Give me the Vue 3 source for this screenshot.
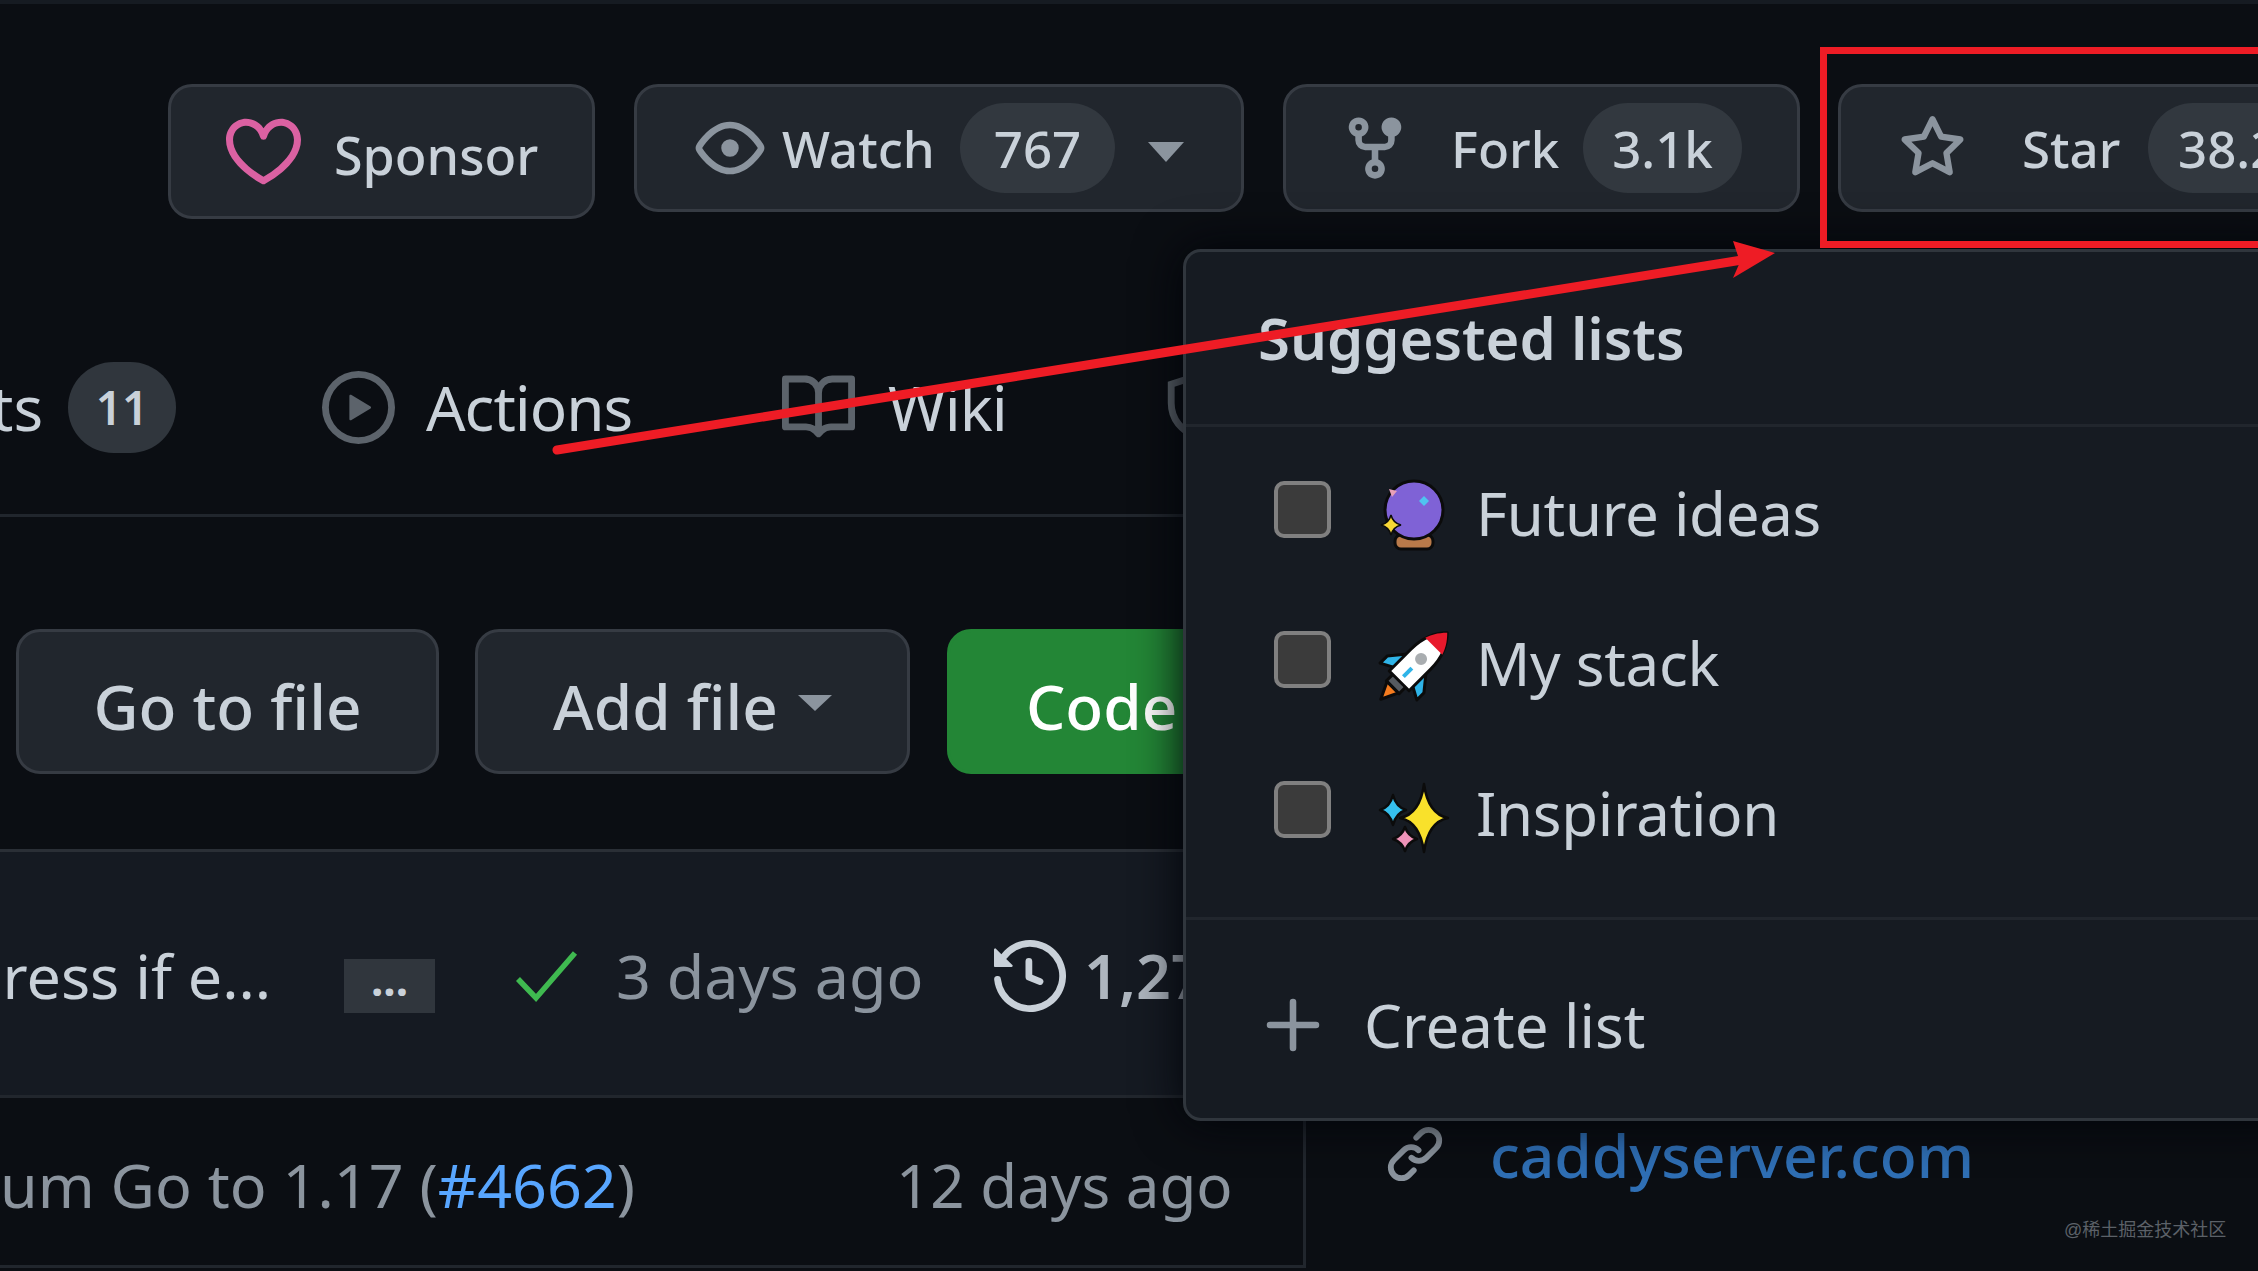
<script setup>
const lists = [
  { name: 'Future ideas', kind: 'ball' },
  { name: 'My stack', kind: 'rocket' },
  { name: 'Inspiration', kind: 'sparkles' }
]
</script>

<template>
  <div class="page">
    <div class="strip"></div>

    <header class="actions">
      <button class="btn sponsor">
        <svg class="i-heart" viewBox="0 0 16 16"><path d="M4.25 2.5c-1.336 0-2.75 1.164-2.75 3 0 2.15 1.58 4.144 3.365 5.682A20.565 20.565 0 008 13.393a20.561 20.561 0 003.135-2.211C12.92 9.644 14.5 7.65 14.5 5.5c0-1.836-1.414-3-2.75-3-1.373 0-2.609.986-3.029 2.456a.75.75 0 01-1.442 0C6.859 3.486 5.623 2.5 4.25 2.5zM8 14.25l-.345.666-.002-.001-.006-.003-.018-.01a7.643 7.643 0 01-.31-.17 22.075 22.075 0 01-3.434-2.414C2.045 10.731 0 8.35 0 5.5 0 2.836 2.086 1 4.25 1 5.797 1 7.153 1.802 8 3.02 8.847 1.802 10.203 1 11.75 1 13.914 1 16 2.836 16 5.5c0 2.85-2.045 5.231-3.885 6.818a22.08 22.08 0 01-3.744 2.584l-.018.01-.006.003h-.002L8 14.25zm0 0l.345.666a.75.75 0 01-.69 0L8 14.25z"/></svg>
        <span>Sponsor</span>
      </button>

      <button class="btn watch">
        <svg class="i-eye" viewBox="0 0 16 16"><path d="M1.679 7.932c.412-.621 1.242-1.75 2.366-2.717C5.175 4.242 6.527 3.5 8 3.5c1.473 0 2.824.742 3.955 1.715 1.124.967 1.954 2.096 2.366 2.717a.119.119 0 010 .136c-.412.621-1.242 1.75-2.366 2.717C10.825 11.758 9.473 12.5 8 12.5c-1.473 0-2.824-.742-3.955-1.715C2.92 9.818 2.09 8.69 1.679 8.068a.119.119 0 010-.136zM8 2c-1.981 0-3.67.992-4.933 2.078C1.797 5.169.88 6.423.43 7.1a1.619 1.619 0 000 1.798c.45.678 1.367 1.932 2.637 3.024C4.329 13.008 6.019 14 8 14c1.981 0 3.67-.992 4.933-2.078 1.27-1.091 2.187-2.345 2.637-3.023a1.619 1.619 0 000-1.798c-.45-.678-1.367-1.932-2.637-3.023C11.671 2.992 9.981 2 8 2zm0 8a2 2 0 100-4 2 2 0 000 4z"/></svg>
        <span class="watch-label">Watch</span>
        <span class="counter watch-count">767</span>
        <span class="caret"></span>
      </button>

      <button class="btn fork">
        <svg class="i-fork" viewBox="0 0 16 16"><path d="M5 3.25a.75.75 0 11-1.5 0 .75.75 0 011.5 0zm0 2.122a2.25 2.25 0 10-1.5 0v.878A2.25 2.25 0 005.75 8.5h1.5v2.128a2.251 2.251 0 101.5 0V8.5h1.5a2.25 2.25 0 002.25-2.25v-.878a2.25 2.25 0 10-1.5 0v.878a.75.75 0 01-.75.75h-4.5A.75.75 0 015 6.25v-.878zm3.75 7.378a.75.75 0 11-1.5 0 .75.75 0 011.5 0zm3-8.75a.75.75 0 100-1.5.75.75 0 000 1.5z"/></svg>
        <span class="fork-label">Fork</span>
        <span class="counter fork-count">3.1k</span>
      </button>

      <button class="btn star">
        <svg class="i-star" viewBox="0 0 16 16"><path d="M8 .25a.75.75 0 01.673.418l1.882 3.815 4.21.612a.75.75 0 01.416 1.279l-3.046 2.97.719 4.192a.75.75 0 01-1.088.791L8 12.347l-3.766 1.98a.75.75 0 01-1.088-.79l.72-4.194L.818 6.374a.75.75 0 01.416-1.28l4.21-.611L7.327.668A.75.75 0 018 .25zm0 2.445L6.615 5.5a.75.75 0 01-.564.41l-3.097.45 2.24 2.184a.75.75 0 01.216.664l-.528 3.084 2.769-1.456a.75.75 0 01.698 0l2.77 1.456-.53-3.084a.75.75 0 01.216-.664l2.24-2.183-3.096-.45a.75.75 0 01-.564-.41L8 2.694v.001z"/></svg>
        <span class="star-label">Star</span>
        <span class="counter star-count">38.2k</span>
      </button>
    </header>

    <nav class="tabs">
      <span class="tab-cut">ts</span>
      <span class="tab-count">11</span>
      <svg class="i-play" viewBox="0 0 16 16"><path d="M1.5 8a6.5 6.5 0 1113 0 6.5 6.5 0 01-13 0zM8 0a8 8 0 100 16A8 8 0 008 0zM6.379 5.227A.25.25 0 006 5.442v5.117a.25.25 0 00.379.214l4.264-2.559a.25.25 0 000-.428L6.379 5.227z"/></svg>
      <span class="tab-actions">Actions</span>
      <svg class="i-book" viewBox="0 0 16 16"><path fill-rule="evenodd" d="M0 1.75A.75.75 0 01.75 1h4.253c1.227 0 2.317.59 3 1.501A3.744 3.744 0 0111.006 1h4.245a.75.75 0 01.75.75v10.5a.75.75 0 01-.75.75h-4.507a2.25 2.25 0 00-1.591.659l-.622.621a.75.75 0 01-1.06 0l-.622-.621A2.25 2.25 0 005.258 13H.75a.75.75 0 01-.75-.75V1.75zm8.755 3a2.25 2.25 0 012.25-2.25H14.5v9h-3.757c-.71 0-1.4.201-1.992.572l.004-7.322zm-1.504 7.324l.004-5.073-.002-2.253A2.25 2.25 0 005.003 2.5H1.5v9h3.757a3.75 3.75 0 011.994.574z"/></svg>
      <span class="tab-wiki">Wiki</span>
      <svg class="i-shield" viewBox="0 0 16 16"><path d="M8 .9l6.2 2v4.1c0 3.4-1.900 6-6.200 7.900C3.700 13 1.800 10.400 1.800 7V2.900z"/></svg>
    </nav>

    <section class="content">
      <div class="left">
        <div class="toolbar">
          <button class="tool goto">Go to file</button>
          <button class="tool addfile">Add file<span class="caret small"></span></button>
          <button class="tool code">Code</button>
        </div>

        <div class="files">
          <div class="row latest">
            <span class="msg">dress if e...</span>
            <span class="dots">...</span>
            <svg class="i-check" viewBox="0 0 16 16"><path d="M2.400 8.600L6 12.400L13.800 3.400"/></svg>
            <span class="age first-age">3 days ago</span>
            <svg class="i-history" viewBox="0 0 16 16"><path d="M1.643 3.143L.427 1.927A.25.25 0 000 2.104V5.750c0 .138.112.25.25.25h3.646a.25.25 0 00.177-.427L2.715 4.215a6.500 6.500 0 11-1.180 4.458.75.75 0 10-1.493.154 8.001 8.001 0 101.600-5.684zM7.750 4a.75.75 0 01.75.75v2.992l2.028.812a.75.75 0 01-.557 1.392l-2.500-1A.75.75 0 017 8.250v-3.500A.75.75 0 017.750 4z"/></svg>
            <strong class="commits">1,27</strong>
          </div>
          <div class="row file">
            <span class="file-msg">um Go to 1.17 (<a class="pr">#4662</a>)</span>
            <span class="age second-age">12 days ago</span>
          </div>
        </div>
      </div>

      <aside class="side">
        <svg class="i-link" viewBox="0 0 16 16"><path d="M7.775 3.275a.75.75 0 001.06 1.06l1.25-1.25a2 2 0 112.83 2.83l-2.5 2.5a2 2 0 01-2.83 0 .75.75 0 00-1.06 1.06 3.5 3.5 0 004.95 0l2.5-2.5a3.5 3.5 0 00-4.95-4.95l-1.25 1.25zm-4.69 9.64a2 2 0 010-2.83l2.5-2.5a2 2 0 012.83 0 .75.75 0 001.06-1.06 3.5 3.5 0 00-4.95 0l-2.5 2.5a3.5 3.5 0 004.95 4.95l1.25-1.25a.75.75 0 00-1.06-1.06l-1.25 1.25a2 2 0 01-2.83 0z"/></svg>
        <a class="site">caddyserver.com</a>
      </aside>
    </section>

    <div class="popover">
      <div class="pop-head">Suggested lists</div>
      <ul class="pop-list">
        <li v-for="item in lists" :key="item.name" class="pop-item">
          <span class="box"></span>
          <svg class="emoji" viewBox="0 0 72 72">
            <g v-if="item.kind === 'ball'" stroke="#0b0b0b" stroke-width="3">
              <rect x="18" y="55" width="38" height="14" rx="6" fill="#b97a4a"/>
              <circle cx="37" cy="30" r="29" fill="#7f62d6"/>
              <path d="M12 9l8 2-5 6z" fill="#e8a0b8" stroke="none"/>
              <path d="M47 16l5 5-5 5-5-5z" fill="#4fc3f0" stroke="none"/>
              <path d="M14 35Q16 43 24 45Q16 47 14 55Q12 47 4 45Q12 43 14 35Z" fill="#f7d736" stroke-width="1.500"/>
            </g>
            <g v-else-if="item.kind === 'rocket'" transform="translate(37 36) rotate(45)" stroke="#0b0b0b" stroke-width="3" stroke-linejoin="round">
              <path d="M-8 30L8 30L0 47Z" fill="#f57c1f"/>
              <path d="M-13 -4L-26 12L-26 22L-13 15Z" fill="#2fb4e8"/>
              <path d="M13 -4L26 12L26 22L13 15Z" fill="#2fb4e8"/>
              <rect x="-9" y="20" width="18" height="10" fill="#555a60"/>
              <path d="M0 -47C10 -37 14 -24 14 -10L14 21L-14 21L-14 -10C-14 -24 -10 -37 0 -47Z" fill="#ffffff"/>
              <path d="M0 -47C7 -40 10 -34 12 -28L-12 -28C-10 -34 -7 -40 0 -47Z" fill="#e8192c" stroke="none"/>
              <circle cx="0" cy="-10" r="6" fill="#a9adb0" stroke="none"/>
              <rect x="-2" y="3" width="4" height="12" fill="#2fb4e8" stroke="none"/>
            </g>
            <g v-else stroke="#0b0b0b" stroke-width="2.500" stroke-linejoin="round">
              <path d="M47 4Q51 34 71 38Q51 42 47 72Q43 42 23 38Q43 34 47 4Z" fill="#f9e12b"/>
              <path d="M16 15Q19 27 29 30Q19 33 16 45Q13 33 3 30Q13 27 16 15Z" fill="#35c0ee"/>
              <path d="M28 47Q31 56 40 59Q31 62 28 71Q25 62 16 59Q25 56 28 47Z" fill="#ef93b8"/>
            </g>
          </svg>
          <span class="label">{{ item.name }}</span>
        </li>
      </ul>
      <div class="pop-foot">
        <svg class="i-plus" viewBox="0 0 16 16"><path d="M8 2a.75.75 0 01.75.75v4.5h4.5a.75.75 0 010 1.5h-4.5v4.5a.75.75 0 01-1.5 0v-4.5h-4.5a.75.75 0 010-1.5h4.5v-4.5A.75.75 0 018 2z"/></svg>
        <span class="create">Create list</span>
      </div>
    </div>

    <div class="red-box"></div>
    <svg class="arrow" viewBox="0 0 2258 1271">
      <path d="M557 450L1742 260" stroke="#ee1c25" stroke-width="9" stroke-linecap="round" fill="none"/>
      <path d="M1775 253L1733 241L1740 262L1733 278Z" fill="#ee1c25"/>
    </svg>
    <div class="mark">@稀土掘金技术社区</div>
  </div>
</template>

<style>
html, body { margin: 0; background: #0b0e13; }
</style>

<style scoped>
.page {
  position: relative;
  width: 2258px;
  height: 1271px;
  overflow: hidden;
  background: #0b0e13;
  color: #c9d1d9;
  font-family: "Noto Sans", "Open Sans", sans-serif;
}
svg { display: block; flex: none; fill: #8b949e; }
button { font-family: inherit; color: #c9d1d9; text-align: left; }
span, strong, a { white-space: nowrap; }
.strip { height: 4px; background: #161b22; }

.actions {
  display: flex;
  align-items: flex-start;
  height: 135px;
  padding: 80px 0 0 168px;
}
.btn {
  display: flex;
  flex: none;
  align-items: center;
  box-sizing: border-box;
  height: 128px;
  padding: 0;
  border: 3px solid #363b43;
  border-radius: 24px;
  background: #21262d;
  font-size: 51px;
  font-weight: 500;
}
.sponsor { width: 427px; height: 135px; margin-right: 39px; padding: 0 0 0 55px; }
.i-heart { width: 75px; height: 75px; fill: #db61a2; margin-right: 33px; }
.sponsor span { position: relative; top: 3px; font-size: 52px; }
.watch { width: 610px; margin-right: 39px; padding-left: 58px; }
.i-eye { width: 70px; height: 70px; margin-right: 17px; }
.counter {
  display: flex;
  flex: none;
  align-items: center;
  justify-content: center;
  height: 90px;
  border-radius: 46px;
  background: #32383f;
  box-sizing: border-box;
}
.watch-label { flex: none; width: 160px; }
.watch-count { width: 155px; margin-left: 18px; }
.caret {
  flex: none;
  width: 0;
  height: 0;
  margin-left: 33px;
  margin-top: 8px;
  border-left: 18px solid transparent;
  border-right: 18px solid transparent;
  border-top: 20px solid #8b949e;
}
.fork { width: 517px; margin-right: 38px; padding-left: 54px; }
.i-fork { width: 70px; height: 70px; margin-right: 41px; }
.fork-label { flex: none; width: 112px; }
.fork-count { width: 159px; margin-left: 20px; }
.star { width: 520px; padding-left: 58px; }
.i-star { width: 67px; height: 67px; margin-right: 56px; }
.star-label { flex: none; width: 100px; }
.star-count { width: 200px; margin-left: 26px; justify-content: flex-start; padding-left: 30px; }

.tabs {
  display: flex;
  align-items: center;
  box-sizing: border-box;
  height: 298px;
  padding: 144px 0 63px 0;
  border-bottom: 3px solid #21262d;
  font-size: 62px;
  letter-spacing: -1px;
}
.tab-cut { flex: none; width: 77px; margin-left: -9px; letter-spacing: 0; }
.tab-count {
  display: flex;
  flex: none;
  align-items: center;
  justify-content: center;
  width: 108px;
  height: 91px;
  border-radius: 46px;
  background: #30363d;
  font-size: 46px;
  font-weight: 600;
  letter-spacing: 0;
}
.i-play { width: 73px; height: 73px; margin-left: 146px; fill: #5c636b; }
.tab-actions { flex: none; width: 208px; margin-left: 31px; }
.i-book { width: 73px; height: 73px; margin-left: 148px; fill: #5c636b; }
.tab-wiki { flex: none; width: 120px; margin-left: 33px; }
.i-shield { width: 73px; height: 73px; margin-left: 155px; fill: none; stroke: #5c636b; stroke-width: 1.500; }

.content { display: flex; }
.left { flex: none; width: 1306px; }
.toolbar {
  display: flex;
  box-sizing: border-box;
  height: 332px;
  padding: 112px 0 0 16px;
}
.tool {
  flex: none;
  display: flex;
  align-items: center;
  justify-content: center;
  box-sizing: border-box;
  height: 145px;
  padding: 8px 0 0;
  border: 3px solid #363b43;
  border-radius: 24px;
  background: #21262d;
  font-size: 62px;
  font-weight: 500;
}
.goto { width: 423px; margin-right: 36px; }
.addfile { width: 435px; margin-right: 37px; }
.caret.small {
  margin: -5px 0 0 20px;
  border-left-width: 17px;
  border-right-width: 17px;
  border-top-width: 16px;
}
.code {
  width: 300px;
  justify-content: flex-start;
  padding-left: 76px;
  border-color: #238636;
  background: #238636;
  color: #fff;
}

.files { border-right: 3px solid #21262d; }
.row {
  display: flex;
  align-items: center;
  box-sizing: border-box;
  overflow: hidden;
  white-space: nowrap;
  font-size: 61px;
}
.latest {
  height: 249px;
  padding-top: 4px;
  background: #151a22;
  border-top: 3px solid #2a2f36;
  border-bottom: 3px solid #21262d;
  color: #c9d1d9;
}
.msg { margin-left: -35px; width: 307px; flex: none; }
.dots {
  flex: none;
  width: 91px;
  height: 54px;
  margin-left: 72px;
  margin-top: 20px;
  text-align: center;
  background: #30363d;
  font-size: 44px;
  font-weight: 700;
  line-height: 40px;
}
.i-check { width: 80px; height: 80px; margin-left: 71px; fill: none; stroke: #3fb950; stroke-width: 1.100; }
.age { color: #8b949e; flex: none; }
.first-age { margin-left: 30px; width: 306px; }
.i-history { width: 72px; height: 72px; margin-left: 72px; fill: #c9d1d9; }
.commits { margin-left: 18px; font-weight: 600; color: #aeb6bf; }
.file {
  height: 170px;
  padding-top: 6px;
  border-bottom: 3px solid #21262d;
  color: #8b949e;
}
.file-msg { flex: none; width: 896px; }
.pr { color: #58a6ff; }
.second-age { width: 340px; font-size: 60px; }

.side { display: flex; align-items: flex-start; padding: 606px 0 0 78px; }
.i-link { width: 62px; height: 62px; fill: #8b949e; }
.site {
  margin: -10px 0 0 44px;
  color: #2f6fb5;
  font-size: 60.500px;
  font-weight: 500;
}

.popover {
  position: absolute;
  left: 1183px;
  top: 249px;
  right: -40px;
  box-sizing: border-box;
  height: 872px;
  display: flex;
  flex-direction: column;
  border: 3px solid #30363d;
  border-radius: 18px;
  background: #161b22;
  box-shadow: 0 0 48px #010409;
}
.pop-head {
  box-sizing: border-box;
  height: 175px;
  padding: 54px 0 0 72px;
  border-bottom: 3px solid #21262d;
  font-size: 58px;
  line-height: 64px;
  font-weight: 600;
}
.pop-list {
  box-sizing: border-box;
  height: 493px;
  margin: 0;
  padding: 7px 0 0 88px;
  list-style: none;
  border-bottom: 3px solid #21262d;
}
.pop-item { display: flex; align-items: center; height: 150px; }
.box {
  flex: none;
  box-sizing: border-box;
  width: 57px;
  height: 57px;
  border: 4px solid #808080;
  border-radius: 10px;
  background: #3b3b3b;
}
.emoji { width: 72px; height: 72px; margin: 14px 0 0 46px; overflow: visible; }
.label { margin: 8px 0 0 27px; font-size: 60px; letter-spacing: -0.3px; }
.pop-foot { flex: 1; display: flex; align-items: center; padding: 12px 0 0 72px; }
.i-plus { width: 70px; height: 70px; fill: #8b949e; }
.create { margin-left: 36px; font-size: 60px; }

.red-box {
  position: absolute;
  left: 1820px;
  top: 47px;
  right: -20px;
  height: 201px;
  box-sizing: border-box;
  border: 7px solid #ee1c25;
}
.arrow {
  position: absolute;
  left: 0;
  top: 0;
  width: 2258px;
  height: 1271px;
  fill: none;
  pointer-events: none;
}
.mark {
  position: absolute;
  left: 2064px;
  top: 1215px;
  color: #5c6168;
  font-size: 18px;
  font-family: "Liberation Sans", "Noto Sans CJK SC", sans-serif;
  white-space: nowrap;
}
</style>
